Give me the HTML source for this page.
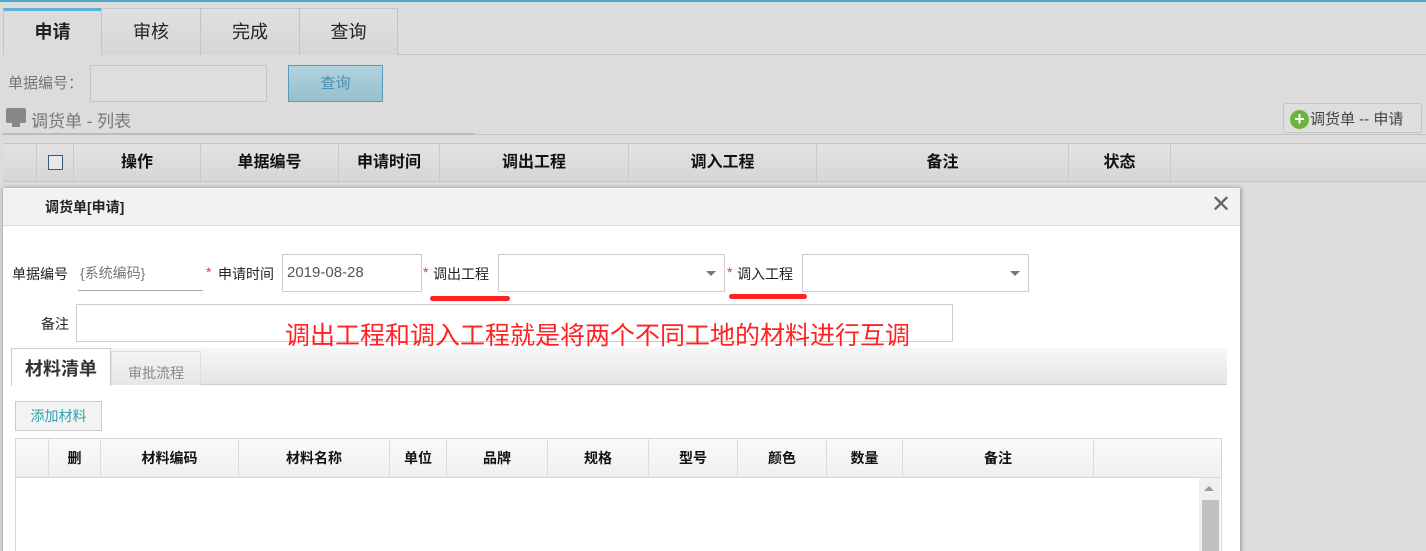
<!DOCTYPE html>
<html><head><meta charset="utf-8"><style>
*{margin:0;padding:0;box-sizing:border-box}
html,body{width:1426px;height:551px;overflow:hidden}
body{background:#dcdcdc;font-family:"Liberation Sans","Noto Sans CJK SC",sans-serif;position:relative;color:#333}
.a{position:absolute}
.tab{position:absolute;top:8px;height:47px;border:1px solid #c4c4c4;border-bottom:none;background:linear-gradient(#dfe0e1,#d4d6d8);font-size:18px;text-align:center;line-height:46px;color:#222}
.th{position:absolute;top:0;height:100%;border-left:1px solid #c9c9c9;text-align:center;font-weight:bold;font-size:16px;color:#111}
.th2{position:absolute;top:0;height:100%;border-left:1px solid #dcdcdc;text-align:center;font-weight:bold;font-size:14px;color:#111;line-height:39px}
.lbl{position:absolute;font-size:14px;color:#222}
.inp{position:absolute;background:#fff;border:1px solid #ccc}
.star{position:absolute;color:#e33;font-size:14px}
</style></head><body>
<div class="a" style="left:0;top:0;width:1426px;height:2px;background:#4aaac8"></div>
<div class="a" style="left:397px;top:54px;width:1029px;height:1px;background:#c4c4c4"></div>
<div class="tab" style="left:3px;width:99px;background:#dcdcdc;border-top:3px solid #5bb3d6;font-weight:bold;line-height:42px">申请</div>
<div class="tab" style="left:101px;width:100px">审核</div>
<div class="tab" style="left:200px;width:100px">完成</div>
<div class="tab" style="left:299px;width:99px">查询</div>

<div class="lbl" style="left:8px;top:72px;font-size:15px;color:#777">单据编号：</div>
<div class="a" style="left:90px;top:65px;width:177px;height:37px;border:1px solid #c4c4c4;background:#dedede"></div>
<div class="a" style="left:288px;top:65px;width:95px;height:37px;border:1px solid #5a9cb8;background:linear-gradient(#b0d3df,#98bfcd);color:#4a8db0;font-size:15px;text-align:center;line-height:35px">查询</div>

<div class="a" style="left:6px;top:108px;width:20px;height:15px;background:#888;border-radius:2px"></div>
<div class="a" style="left:12px;top:123px;width:8px;height:4px;background:#888"></div>
<div class="lbl" style="left:31px;top:107px;font-size:17px;color:#777">调货单 - 列表</div>
<div class="a" style="left:2px;top:133px;width:473px;height:2px;background:#bbb"></div>
<div class="a" style="left:475px;top:134px;width:951px;height:1px;background:#c4c4c4"></div>

<div class="a" style="left:1283px;top:103px;width:139px;height:30px;border:1px solid #c4c4c4;border-radius:3px;background:#dedede"></div>
<div class="a" style="left:1290px;top:110px;width:19px;height:19px;border-radius:50%;background:#6cb33e;color:#fff;font-weight:bold;font-size:18px;line-height:19px;text-align:center">+</div>
<div class="lbl" style="left:1310px;top:108px;font-size:15px;color:#444">调货单 -- 申请</div>

<div class="a" style="left:3px;top:143px;width:1423px;height:39px;border-top:1px solid #c4c4c4;border-bottom:1px solid #c4c4c4;background:linear-gradient(#e2e2e2,#d6d6d6);line-height:37px">
<div class="th" style="left:33px;width:37px"><span style="display:inline-block;width:15px;height:15px;border:1px solid #3a5a7a;background:#e8e8e8;margin-top:11px;vertical-align:top"></span></div>
<div class="th" style="left:70px;width:127px">操作</div>
<div class="th" style="left:197px;width:138px">单据编号</div>
<div class="th" style="left:335px;width:101px">申请时间</div>
<div class="th" style="left:436px;width:189px">调出工程</div>
<div class="th" style="left:625px;width:188px">调入工程</div>
<div class="th" style="left:813px;width:252px">备注</div>
<div class="th" style="left:1065px;width:102px">状态</div>
<div class="th" style="left:1167px;width:1px"></div>
</div>

<div class="a" style="left:2px;top:188px;width:1238px;height:380px;background:#fff;box-shadow:1px 0 4px rgba(0,0,0,.35);border-left:1px solid #bbb">
<div class="a" style="left:0;top:0;width:100%;height:38px;background:#f2f2f2;border-bottom:1px solid #ddd"></div>
<div class="a" style="left:42px;top:9px;font-size:14px;font-weight:bold;color:#222">调货单[申请]</div>
<div class="a" style="left:1208px;top:2px;font-size:24px;color:#666;font-weight:300">✕</div>
</div>

<div class="lbl" style="left:12px;top:264px">单据编号</div>
<div class="lbl" style="left:80px;top:263px;color:#777">{系统编码}</div>
<div class="a" style="left:78px;top:290px;width:125px;height:1px;background:#aaa"></div>
<div class="star" style="left:206px;top:264px">*</div>
<div class="lbl" style="left:218px;top:264px">申请时间</div>
<div class="inp" style="left:282px;top:254px;width:140px;height:38px;font-size:15px;color:#555;padding:9px 0 0 4px">2019-08-28</div>
<div class="star" style="left:423px;top:264px">*</div>
<div class="lbl" style="left:433px;top:264px">调出工程</div>
<div class="inp" style="left:498px;top:254px;width:227px;height:38px"><div class="a" style="right:8px;top:16px;border:5px solid transparent;border-top:5px solid #777"></div></div>
<div class="star" style="left:727px;top:264px">*</div>
<div class="lbl" style="left:737px;top:264px">调入工程</div>
<div class="inp" style="left:802px;top:254px;width:227px;height:38px"><div class="a" style="right:8px;top:16px;border:5px solid transparent;border-top:5px solid #777"></div></div>
<div class="a" style="left:430px;top:296px;width:80px;height:5px;border-radius:3px;background:#f22"></div>
<div class="a" style="left:729px;top:294px;width:78px;height:5px;border-radius:3px;background:#f22"></div>

<div class="lbl" style="left:41px;top:314px">备注</div>
<div class="inp" style="left:76px;top:304px;width:877px;height:38px"></div>
<div class="a" style="left:285px;top:316px;font-size:25px;color:#f22;white-space:nowrap">调出工程和调入工程就是将两个不同工地的材料进行互调</div>

<div class="a" style="left:12px;top:348px;width:1215px;height:37px;background:linear-gradient(#f7f7f7,#e4e4e4);border-bottom:1px solid #ccc"></div>
<div class="a" style="left:11px;top:348px;width:100px;height:38px;background:#fff;border:1px solid #ccc;border-bottom:none;font-size:18px;font-weight:bold;color:#333;text-align:center;line-height:40px">材料清单</div>
<div class="a" style="left:111px;top:351px;width:90px;height:34px;border:1px solid #ddd;border-bottom:none;background:linear-gradient(#f4f4f4,#e6e6e6);font-size:14px;color:#888;text-align:center;line-height:42px">审批流程</div>

<div class="a" style="left:15px;top:401px;width:87px;height:30px;border:1px solid #ccc;background:#f3f3f3;color:#2aa3b0;font-size:14px;text-align:center;line-height:29px">添加材料</div>

<div class="a" style="left:15px;top:438px;width:1207px;height:130px;border:1px solid #d6d6d6;border-bottom:none">
<div class="a" style="left:0;top:0;width:100%;height:39px;background:linear-gradient(#fafafa,#efefef);border-bottom:1px solid #d6d6d6">
<div class="th2" style="left:32px;width:52px">删</div>
<div class="th2" style="left:84px;width:138px">材料编码</div>
<div class="th2" style="left:222px;width:151px">材料名称</div>
<div class="th2" style="left:373px;width:57px">单位</div>
<div class="th2" style="left:430px;width:101px">品牌</div>
<div class="th2" style="left:531px;width:101px">规格</div>
<div class="th2" style="left:632px;width:89px">型号</div>
<div class="th2" style="left:721px;width:89px">颜色</div>
<div class="th2" style="left:810px;width:76px">数量</div>
<div class="th2" style="left:886px;width:191px">备注</div>
<div class="th2" style="left:1077px;width:1px"></div>
</div>
<div class="a" style="left:1183px;top:39px;width:21px;height:90px;background:#f0f0f0"></div>
<div class="a" style="left:1188px;top:47px;border:5px solid transparent;border-bottom:5px solid #999;border-top:none"></div>
<div class="a" style="left:1186px;top:61px;width:17px;height:70px;background:#c1c1c1"></div>
</div>
</body></html>
